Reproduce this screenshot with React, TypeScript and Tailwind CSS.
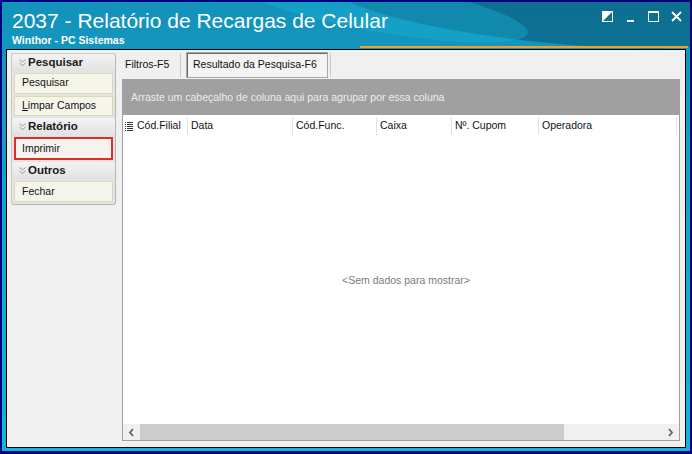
import React from "react";

const ui = { fontFamily: '"Liberation Sans", Arial, sans-serif' };

function Chevrons() {
    return (
        <svg width="9" height="9" viewBox="0 0 9 9" className="shrink-0">
            <path d="M1.5 1.5 L4.5 4 L7.5 1.5 M1.5 5 L4.5 7.5 L7.5 5" fill="none" stroke="#9a9a9a" strokeWidth="1" />
        </svg>
    );
}

function GroupHeader({ label }: { label: string }) {
    return (
        <div className="h-[17px] flex items-center gap-[1px] pl-[6px] bg-gradient-to-b from-[#f4f4f4] to-[#e2e2e2] rounded-t-[3px]">
            <Chevrons />
            <span className="text-[11.5px] font-bold text-[#1a1a1a]">{label}</span>
        </div>
    );
}

function NavButton({ label, active, underline }: { label: string; active?: boolean; underline?: boolean }) {
    return (
        <div
            className={
                active
                    ? "mx-[2px] h-[25px] flex items-center pl-[6px] bg-[#f5f4ee] border-2 border-[#e22b2b]"
                    : "mx-[2px] h-[22px] flex items-center pl-[7px] bg-[#f6f5ea] border border-[#dcd9b6]"
            }
        >
            <span className="text-[10.5px] text-[#111]">
                {underline ? (
                    <>
                        <span className="underline">L</span>
                        {label.slice(1)}
                    </>
                ) : (
                    label
                )}
            </span>
        </div>
    );
}

function ColumnIcon() {
    return (
        <svg width="8" height="9" viewBox="0 0 8 9" className="shrink-0">
            <g fill="#333">
                <rect x="0" y="0" width="1" height="1" />
                <rect x="0" y="2" width="1" height="1" />
                <rect x="0" y="4" width="1" height="1" />
                <rect x="0" y="6" width="1" height="1" />
                <rect x="0" y="8" width="1" height="1" />
                <rect x="2" y="0" width="6" height="1" />
                <rect x="2" y="2" width="6" height="1" />
                <rect x="2" y="4" width="6" height="1" />
                <rect x="2" y="6" width="6" height="1" />
                <rect x="2" y="8" width="6" height="1" />
            </g>
        </svg>
    );
}

const columns = [
    { title: "Cód.Filial", w: "w-[54px]" },
    { title: "Data", w: "w-[105px]" },
    { title: "Cód.Func.", w: "w-[84px]" },
    { title: "Caixa", w: "w-[75px]" },
    { title: "Nº. Cupom", w: "w-[87px]" },
    { title: "Operadora", w: "w-[138px]" },
];

export default function App() {
    return (
        <div className="w-[692px] h-[454px] bg-[#00007c] pt-[2px] pl-[2px] pr-[2px] pb-[3px]" style={ui}>
            <div className="relative h-full flex flex-col overflow-hidden bg-gradient-to-b from-[#1392bb] via-[#14a6ca] to-[#10b6d6]">
                {/* window swooshes */}
                <div className="absolute -top-[30px] right-[-60px] w-[420px] h-[70px] rounded-[50%] bg-[#0b5f80] opacity-70 rotate-[6deg]" />
                <div className="absolute -top-[20px] right-[160px] w-[300px] h-[50px] rounded-[50%] bg-[#1ab2d6] opacity-40 rotate-[10deg]" />

                {/* title bar */}
                <div className="relative h-[47px] shrink-0 pl-[10px]">
                    <div className="pt-[7px] text-[21px] leading-[24px] text-white">2037 - Relatório de Recargas de Celular</div>
                    <div className="mt-[1px] text-[10.5px] leading-[12px] font-bold text-white">Winthor - PC Sistemas</div>
                    <div className="absolute left-[358px] right-[2px] bottom-[1px] h-[2px] bg-[#f0a02c]" />
                    <div className="absolute top-[9px] right-[8px] flex items-center gap-[12px]">
                        <svg width="11" height="11" viewBox="0 0 11 11">
                            <rect x="0.5" y="0.5" width="10" height="10" fill="none" stroke="#fff" />
                            <path d="M0 0 H11 L0 11 Z" fill="#fff" />
                        </svg>
                        <svg width="11" height="11" viewBox="0 0 11 11">
                            <rect x="2" y="9" width="7" height="2" fill="#fff" />
                        </svg>
                        <svg width="11" height="11" viewBox="0 0 11 11">
                            <rect x="0.5" y="0.5" width="10" height="10" fill="none" stroke="#fff" />
                            <rect x="0" y="0" width="11" height="2" fill="#fff" />
                        </svg>
                        <svg width="11" height="11" viewBox="0 0 11 11">
                            <path d="M1 1 L10 10 M10 1 L1 10" stroke="#fff" strokeWidth="1.8" />
                        </svg>
                    </div>
                </div>

                {/* client area */}
                <div className="relative flex-1 mx-[4px] mb-[3px] border border-black bg-[#f0f0f0] flex pl-[4px] pt-[3px] text-[10.5px] text-[#111]">
                    {/* side menu */}
                    <div className="w-[105px] h-[152px] shrink-0 flex flex-col gap-[2px] rounded-[3px] border border-[#c9c9c9] border-r-[#b5b5b5] border-b-[#b5b5b5] bg-[#e4e4e4] pb-[2px]">
                        <GroupHeader label="Pesquisar" />
                        <NavButton label="Pesquisar" />
                        <NavButton label="Limpar Campos" underline />
                        <GroupHeader label="Relatório" />
                        <NavButton label="Imprimir" active />
                        <GroupHeader label="Outros" />
                        <NavButton label="Fechar" />
                    </div>

                    {/* tabs + grid */}
                    <div className="flex-1 flex flex-col pl-[2px] pr-[2px]">
                        <div className="h-[24px] flex items-stretch">
                            <div className="w-[63px] flex items-center pl-[7px] border-r border-[#c8c8c8]">Filtros-F5</div>
                            <div className="ml-[5px] my-[-1px] w-[142px] flex items-center pl-[6px] bg-[#f4f4f4] border border-[#a8a8a8] shadow-[inset_1px_1px_0_#6a6a6a]">
                                Resultado da Pesquisa-F6
                            </div>
                            <div className="ml-[2px] w-px bg-[#c8c8c8]" />
                        </div>

                        <div className="mt-[2px] ml-[4px] mr-[3px] flex-1 mb-[6px] flex flex-col border border-[#a0a0a0] bg-white">
                            <div className="h-[35px] shrink-0 bg-[#a0a0a0] flex items-center pl-[8px] text-[#ececec]">
                                Arraste um cabeçalho de coluna aqui para agrupar por essa coluna
                            </div>
                            <div className="h-[22px] shrink-0 flex items-center">
                                <div className="w-[11px] flex justify-center pl-[1px]">
                                    <ColumnIcon />
                                </div>
                                {columns.map((c) => (
                                    <div key={c.title} className={`${c.w} h-[18px] flex items-center pl-[3px] border-r border-[#e3e3e3]`}>
                                        {c.title}
                                    </div>
                                ))}
                            </div>
                            <div className="flex-1 flex items-center justify-center pl-[10px] text-[#7c7c7c]">
                                &lt;Sem dados para mostrar&gt;
                            </div>
                            <div className="h-[16px] shrink-0 flex bg-[#f0f0f0]">
                                <div className="w-[17px] flex items-center justify-center">
                                    <svg width="7" height="9" viewBox="0 0 7 9">
                                        <path d="M5 1 L2 4.5 L5 8" fill="none" stroke="#606060" strokeWidth="1.8" />
                                    </svg>
                                </div>
                                <div className="w-[424px] bg-[#cdcdcd]" />
                                <div className="flex-1" />
                                <div className="w-[17px] flex items-center justify-center">
                                    <svg width="7" height="9" viewBox="0 0 7 9">
                                        <path d="M2 1 L5 4.5 L2 8" fill="none" stroke="#606060" strokeWidth="1.8" />
                                    </svg>
                                </div>
                            </div>
                        </div>
                    </div>
                </div>
            </div>
        </div>
    );
}
